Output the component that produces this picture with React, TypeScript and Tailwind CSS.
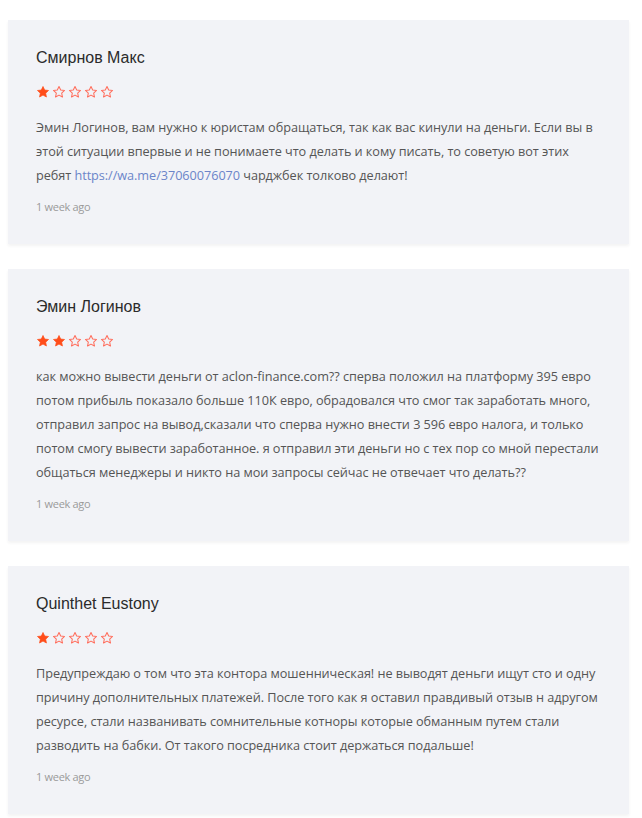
import React from "react";

const STAR = "M12 2.5l2.9 6.1 6.6.8-4.9 4.6 1.3 6.6L12 17.3l-5.9 3.3 1.3-6.6-4.9-4.6 6.6-.8z";

function Stars({ n }: { n: number }) {
  return (
    <div className="flex items-center gap-[2px] h-4">
      {[0, 1, 2, 3, 4].map((i) => (
        <svg key={i} width="14" height="14" viewBox="0 0 24 24">
          {i < n ? (
            <path d={STAR} fill="#ff4d1a" stroke="#ff4d1a" strokeWidth="1.2" strokeLinejoin="round" />
          ) : (
            <path d={STAR} fill="none" stroke="#ff6f5e" strokeWidth="1.8" strokeLinejoin="round" />
          )}
        </svg>
      ))}
    </div>
  );
}

type Review = { name: string; stars: number; body: React.ReactNode };

const reviews: Review[] = [
  {
    name: "Смирнов Макс",
    stars: 1,
    body: (
      <>
        Эмин Логинов, вам нужно к юристам обращаться, так как вас кинули на деньги. Если вы в этой ситуации впервые и не понимаете что делать и кому писать, то советую вот этих ребят{" "}
        <a className="text-[#6b85c9]">https://wa.me/37060076070</a> чарджбек толково делают!
      </>
    ),
  },
  {
    name: "Эмин Логинов",
    stars: 2,
    body: "как можно вывести деньги от aclon-finance.com?? сперва положил на платформу 395 евро потом прибыль показало больше 110К евро, обрадовался что смог так заработать много, отправил запрос на вывод,сказали что сперва нужно внести 3 596 евро налога, и только потом смогу вывести заработанное. я отправил эти деньги но с тех пор со мной перестали общаться менеджеры и никто на мои запросы сейчас не отвечает что делать??",
  },
  {
    name: "Quinthet Eustony",
    stars: 1,
    body: "Предупреждаю о том что эта контора мошенническая! не выводят деньги ищут сто и одну причину дополнительных платежей. После того как я оставил правдивый отзыв н адругом ресурсе, стали названивать сомнительные котноры которые обманным путем стали разводить на бабки. От такого посредника стоит держаться подальше!",
  },
];

export default function App() {
  return (
    <div className="w-[642px] bg-white pt-5 pl-2 pr-[13px]">
      {reviews.map((r, i) => (
        <div
          key={i}
          className="bg-[#f2f3f7] mb-[25px] pl-7 pr-6 pt-7 pb-[29px] shadow-[0_2px_3px_rgba(0,0,0,0.05)]"
        >
          <div className="text-[16px] leading-5 text-[#2b2b2b]" style={{ fontFamily: '"Liberation Sans", Arial, sans-serif' }}>
            {r.name}
          </div>
          <div className="mt-4">
            <Stars n={r.stars} />
          </div>
          <div
            className="mt-[15px] text-[12.7px] leading-6 text-[#555555] tracking-[-0.05px]"
            style={{ fontFamily: '"Open Sans", sans-serif' }}
          >
            {r.body}
          </div>
          <div
            className="mt-3 text-[11px] leading-4 text-[#9a9a9a] tracking-[-0.3px]"
            style={{ fontFamily: '"Open Sans", sans-serif' }}
          >
            1 week ago
          </div>
        </div>
      ))}
    </div>
  );
}
